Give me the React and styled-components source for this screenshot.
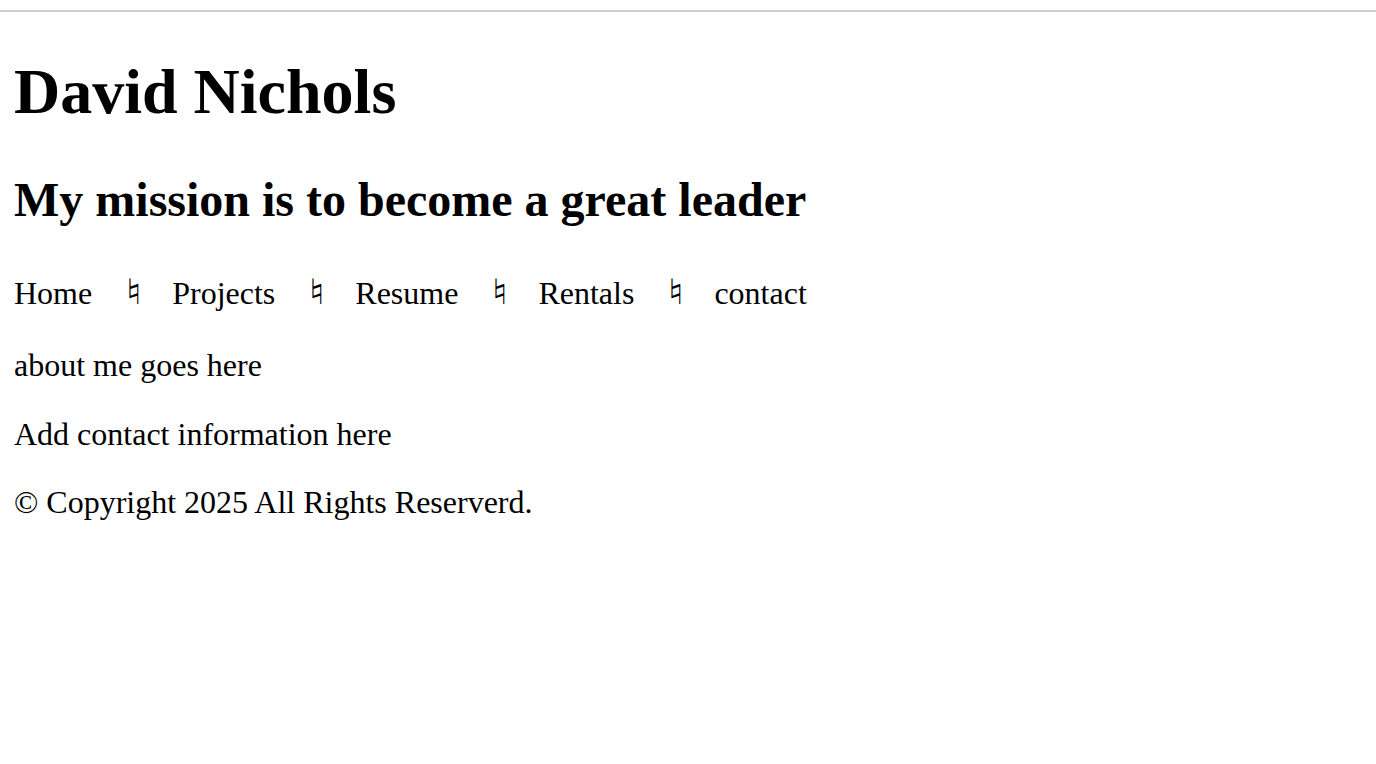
import React from 'react';
import styled, { createGlobalStyle } from 'styled-components';

const GlobalStyle = createGlobalStyle`
  html, body {
    margin: 0;
    padding: 0;
    background: #fff;
  }
  body {
    font-family: "Liberation Serif", "Times New Roman", serif;
    color: #000;
  }
`;

const TopRule = styled.div`
  height: 2px;
  margin-top: 10px;
  background-color: #cfcfcf;
`;

const Page = styled.div`
  padding: 0 14px;
`;

const Title = styled.h1`
  font-size: 64px;
  font-weight: bold;
  line-height: 1.15;
  margin: 43px 0;
`;

const Mission = styled.h2`
  font-size: 48px;
  font-weight: bold;
  line-height: 1.15;
  margin: 40px 0;
`;

const Nav = styled.nav`
  display: flex;
  align-items: baseline;
  gap: 35px;
  font-size: 32px;
  line-height: 44px;
  padding-top: 4px;
  margin: 32px 0;
`;

const NavLink = styled.a`
  color: #000;
  text-decoration: none;
`;

const Separator = styled.span`
  display: inline-block;
  width: 10px;
  line-height: 0;
  text-align: center;
  color: #000;
  font-family: "DejaVu Sans", sans-serif;
  font-size: 35px;
  font-variant-emoji: text;
  transform: scaleX(1.3);
`;

const Text = styled.p`
  font-size: 32px;
  line-height: 1.15;
  margin: 32px 0;
`;

const links = ['Home', 'Projects', 'Resume', 'Rentals', 'contact'];

function App() {
  return (
    <>
      <GlobalStyle />
      <TopRule />
      <Page>
        <header>
          <Title>David Nichols</Title>
          <Mission>My mission is to become a great leader</Mission>
        </header>
        <Nav>
          {links.map((link, i) => (
            <React.Fragment key={link}>
              {i > 0 && <Separator>♮</Separator>}
              <NavLink href="#">{link}</NavLink>
            </React.Fragment>
          ))}
        </Nav>
        <Text>about me goes here</Text>
        <Text>Add contact information here</Text>
        <footer>
          <Text>© Copyright 2025 All Rights Reserverd.</Text>
        </footer>
      </Page>
    </>
  );
}

export default App;
